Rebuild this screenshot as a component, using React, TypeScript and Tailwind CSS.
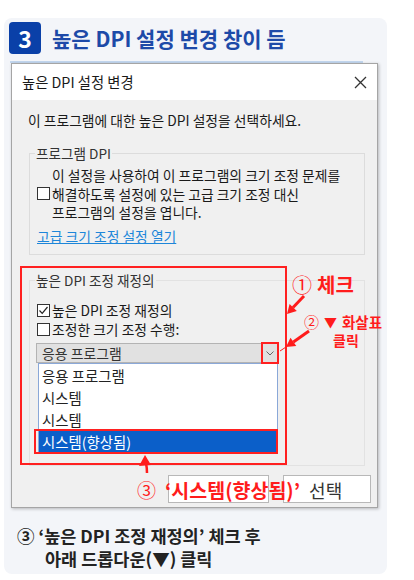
import React from "react";

const F = { fontFamily: '"Noto Sans CJK KR", "Noto Sans", sans-serif' };

function Box({ checked }: { checked?: boolean }) {
  return (
    <span className="w-[13px] h-[13px] border border-[#333] bg-white shrink-0 flex items-center justify-center">
      {checked && (
        <svg width="11" height="11" viewBox="0 0 11 11">
          <path d="M1.5 5.5 L4.2 8.3 L9.5 2" fill="none" stroke="#222" strokeWidth="1.2" />
        </svg>
      )}
    </span>
  );
}

export default function App() {
  return (
    <div className="relative w-[414px] h-[580px] bg-white pt-[18px] pl-[4px] overflow-hidden" style={F}>
      <div className="w-[383px] h-[556px] rounded-[8px] bg-[#f3f5f9] pt-[4px]">
        {/* header */}
        <div className="ml-[5px] flex items-center gap-[11px]">
          <div className="w-[32px] h-[32px] rounded-[4px] bg-[#0a40a8] flex items-center justify-center text-white text-[23px] font-bold leading-none">
            3
          </div>
          <div className="text-[21px] font-bold text-[#1d4aa8] leading-none">높은 DPI 설정 변경 창이 듬</div>
        </div>
        <div className="ml-[6px] mt-[7px] w-[353px] h-[2px] bg-[#c3d7ef]" />
        {/* dialog */}
        <div className="ml-[7px] w-[367px] h-[445px] border border-[#a5a5a5] bg-[#f0f0f0] shadow-[1px_1px_3px_rgba(0,0,0,0.25)] flex flex-col">
          <div className="h-[36px] bg-white flex items-center justify-between pl-[10px] pr-[10px]">
            <span className="text-[14.3px] text-[#1a1a1a]">높은 DPI 설정 변경</span>
            <svg width="13" height="13" viewBox="0 0 13 13">
              <path d="M1 1 L12 12 M12 1 L1 12" stroke="#333" strokeWidth="1.3" />
            </svg>
          </div>
          <div className="relative flex-1 pt-[10px]">
            <p className="pl-[16px] text-[13.8px] leading-[20px] text-[#1a1a1a]">
              이 프로그램에 대한 높은 DPI 설정을 선택하세요.
            </p>
            {/* group 1 */}
            <div className="relative ml-[17px] mt-[23px] w-[336px] h-[102px] border border-[#dcdcdc] pt-[12px] pl-[7px]">
              <span className="absolute -top-[10px] left-[5px] px-[1px] bg-[#f0f0f0] text-[13.6px] leading-[18px] text-[#333]">
                프로그램 DPI
              </span>
              <div className="flex items-center gap-[2px]">
                <Box />
                <div className="text-[13.8px] leading-[18.5px] text-[#1a1a1a]">
                  <div>이 설정을 사용하여 이 프로그램의 크기 조정 문제를</div>
                  <div>해결하도록 설정에 있는 고급 크기 조정 대신</div>
                  <div>프로그램의 설정을 엽니다.</div>
                </div>
              </div>
              <div className="mt-[5px] text-[13.8px] leading-[18px] text-[#1d86d9] underline">고급 크기 조정 설정 열기</div>
            </div>
            {/* group 2 */}
            <div className="relative ml-[17px] mt-[25px] w-[336px] h-[186px] border border-[#e2e2e2] pt-[20px] pl-[7px]">
              <span className="absolute -top-[10px] left-[5px] px-[1px] bg-[#f0f0f0] text-[13.6px] leading-[18px] text-[#333]">
                높은 DPI 조정 재정의
              </span>
              <div className="flex items-center gap-[2px] h-[19px] text-[13.8px] text-[#1a1a1a]">
                <Box checked />
                <span>높은 DPI 조정 재정의</span>
              </div>
              <div className="flex items-center gap-[2px] h-[19px] text-[13.8px] text-[#1a1a1a]">
                <Box />
                <span>조정한 크기 조정 수행:</span>
              </div>
              {/* combobox */}
              <div className="relative mt-[4px] -ml-[1px] w-[242px] h-[20px] bg-[#e1e1e1] border border-[#b3b3b3] flex items-center pl-[5px] text-[13.9px] text-[#333]">
                응용 프로그램
                <div className="absolute right-0 top-0 w-[15px] h-[18px] flex items-center justify-center">
                  <svg width="8" height="5" viewBox="0 0 8 5">
                    <path d="M0.5 0.5 L4 4 L7.5 0.5" fill="none" stroke="#666" strokeWidth="1" />
                  </svg>
                </div>
                <span className="absolute -right-[2px] -top-[2px] w-[18px] h-[22px] border-2 border-[#ff2020]" />
              </div>
              {/* dropdown list */}
              <div className="ml-[1px] w-[240px] bg-white border border-[#8aa8d8] text-[14.4px] text-[#222]">
                <div className="h-[23px] flex items-center pl-[3px]">응용 프로그램</div>
                <div className="h-[22px] flex items-center pl-[3px]">시스템</div>
                <div className="h-[21px] flex items-center pl-[3px]">시스템</div>
                <div className="relative h-[23px] flex items-center pl-[3px] bg-[#0b5fc9] text-white">
                  시스템(향상됨)
                  <span className="absolute -left-[5px] -top-[1px] -right-[1px] -bottom-[1px] border-2 border-[#ff2020]" />
                </div>
              </div>
            </div>
            {/* buttons */}
            <div className="mt-[9px] flex justify-end gap-[14px] pr-[6px]">
              <div className="w-[101px] h-[28px] bg-white border border-[#b8b8b8]" />
              <div className="w-[88px] h-[28px] bg-white border border-[#b8b8b8]" />
            </div>
            {/* red box */}
            <span className="absolute left-[8px] top-[166px] w-[267px] h-[199px] border-2 border-[#ff2020]" />
          </div>
        </div>
        {/* bottom text */}
        <div className="ml-[13px] mt-[16px] text-[17.5px] font-bold leading-[23px] text-[#222]">
          <div>③ ‘높은 DPI 조정 재정의’ 체크 후</div>
          <div className="pl-[28px]">아래 드롭다운(▼) 클릭</div>
        </div>
      </div>

      {/* annotations */}
      <div className="absolute left-[292px] top-[272px] flex items-center gap-[5px] text-[#ff1c1c] font-bold leading-[26px]">
        <span className="text-[20px] font-normal">①</span>
        <span className="text-[20px]">체크</span>
      </div>
      <div className="absolute left-[304px] top-[312px] flex items-center gap-[5px] text-[#ff1c1c] font-bold text-[14px] leading-[20px]">
        <span className="text-[15px] font-normal">②</span>
        <span className="text-[13px]">▼</span>
        <span className="text-[14.5px]">화살표</span>
      </div>
      <div className="absolute left-[333px] top-[330px] text-[#ff1c1c] font-bold text-[14px] leading-[20px]">클릭</div>
      <div className="absolute left-[137px] top-[477px] flex items-center leading-[26px]">
        <span className="text-[19px] text-[#ff1c1c]">③</span>
        <span className="ml-[9px] text-[19.5px] font-bold text-[#ff1c1c]">‘시스템(향상됨)’</span>
        <span className="ml-[9px] text-[18px] text-[#333]">선택</span>
      </div>
      <svg className="absolute left-0 top-0 pointer-events-none" width="414" height="580" viewBox="0 0 414 580">
        <line x1="304" y1="296" x2="293" y2="307.5" stroke="#ff1c1c" strokeWidth="3" />
        <polygon points="287,314 296.8,310.9 289.6,304.1" fill="#ff1c1c" />
        <line x1="309" y1="331" x2="293.4" y2="341.9" stroke="#ff1c1c" strokeWidth="3" />
        <polygon points="286,347 296.3,346 290.5,337.8" fill="#ff1c1c" />
        <line x1="286" y1="347" x2="280" y2="351" stroke="#ff1c1c" strokeWidth="1" />
        <path d="M146 463 Q147 468 147 473" fill="none" stroke="#ff1c1c" strokeWidth="2.5" />
        <polygon points="145,455 139,466 151,465" fill="#ff1c1c" />
      </svg>
    </div>
  );
}
